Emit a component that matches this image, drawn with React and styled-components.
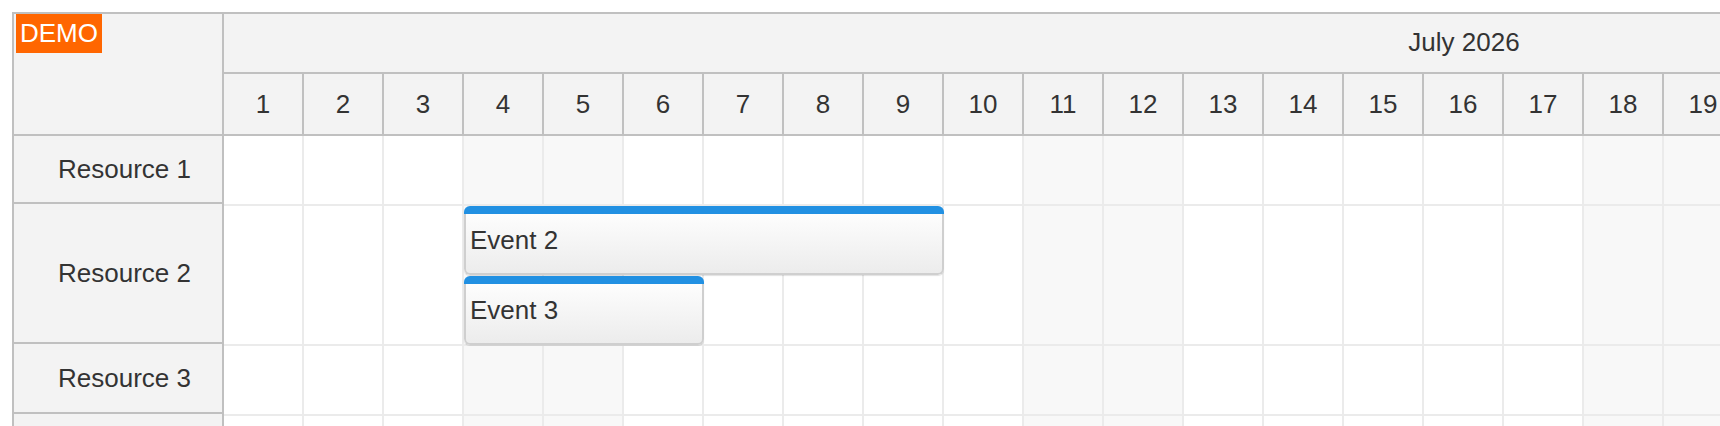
import React from "react";
import styled, { createGlobalStyle } from "styled-components";

const GlobalStyle = createGlobalStyle`
    body {
        margin: 0;
        background: #fff;
        font-family: "Liberation Sans", Arial, sans-serif;
        color: #333;
    }
`;

const CELL = 80;
const DAYS = 31;

const Page = styled.div`
    width: 1720px;
    height: 426px;
    overflow: hidden;
    padding: 12px 0 0 12px;
    box-sizing: border-box;
`;

const Scheduler = styled.div`
    display: flex;
    align-items: flex-start;
    border-left: 2px solid #c0c0c0;
    border-top: 2px solid #c0c0c0;
    font-size: 26px;
`;

const LeftPane = styled.div`
    flex: none;
    width: 210px;
    box-sizing: border-box;
    background: #f3f3f3;
    border-right: 2px solid #c0c0c0;
`;

const Corner = styled.div`
    height: 122px;
    box-sizing: border-box;
    padding-left: 2px;
    border-bottom: 2px solid #c0c0c0;
`;

const DemoBadge = styled.span`
    display: inline-block;
    background: #ff6600;
    color: #fff;
    line-height: 30px;
    padding: 4px 4px 5px;
`;

const ResourceRow = styled.div`
    display: flex;
    align-items: center;
    height: ${(props) => props.h}px;
    box-sizing: border-box;
    padding-left: 44px;
    border-bottom: 2px solid #c0c0c0;
`;

const RightPane = styled.div`
    flex: none;
    width: ${CELL * DAYS}px;
`;

const MonthRow = styled.div`
    height: 60px;
    box-sizing: border-box;
    display: flex;
    align-items: center;
    justify-content: center;
    padding-bottom: 2px;
    background: #f3f3f3;
    border-bottom: 2px solid #c0c0c0;
`;

const DayRow = styled.div`
    display: flex;
    height: 62px;
    box-sizing: border-box;
    background: #f3f3f3;
    border-bottom: 2px solid #c0c0c0;
`;

const DayCell = styled.div`
    flex: none;
    width: ${CELL}px;
    box-sizing: border-box;
    border-right: 2px solid #c0c0c0;
    display: flex;
    align-items: center;
    justify-content: center;
`;

const GridRow = styled.div`
    position: relative;
    display: flex;
    height: ${(props) => props.h}px;
    box-sizing: border-box;
    border-bottom: 2px solid #ebebeb;
`;

const GridCell = styled.div`
    flex: none;
    width: ${CELL}px;
    box-sizing: border-box;
    border-right: 2px solid #ebebeb;
    background: ${(props) => (props.weekend ? "#f8f8f8" : "#fff")};
`;

const EventBox = styled.div`
    position: absolute;
    display: flex;
    flex-direction: column;
    height: 69px;
    border-radius: 6px;
    overflow: hidden;
    box-shadow: 0 1px 1px rgba(0, 0, 0, 0.12);
`;

const EventBar = styled.div`
    flex: none;
    height: 8px;
    background: #2190e2;
`;

const EventBody = styled.div`
    flex: 1;
    border: 2px solid #cfcfcf;
    border-top: none;
    border-radius: 0 0 6px 6px;
    background: linear-gradient(to bottom, #fdfdfd, #ececec);
    padding: 11px 0 0 4px;
    line-height: 30px;
`;

const resources = [
    { name: "Resource 1", left: 68, grid: 70, events: [] },
    {
        name: "Resource 2",
        left: 140,
        grid: 140,
        events: [
            { text: "Event 2", start: 4, days: 6, lane: 0 },
            { text: "Event 3", start: 4, days: 3, lane: 1 },
        ],
    },
    { name: "Resource 3", left: 70, grid: 70, events: [] },
    { name: "Resource 4", left: 70, grid: 70, events: [] },
];

const days = Array.from({ length: DAYS }, (_, i) => i + 1);

// July 1st 2026 is a Wednesday
const isWeekend = (d) => {
    const dow = (2 + d) % 7; // 0 = Sun
    return dow === 0 || dow === 6;
};

const App = () => {
    return (
        <Page>
            <GlobalStyle />
            <Scheduler>
                <LeftPane>
                    <Corner>
                        <DemoBadge>DEMO</DemoBadge>
                    </Corner>
                    {resources.map((r) => (
                        <ResourceRow key={r.name} h={r.left}>
                            {r.name}
                        </ResourceRow>
                    ))}
                </LeftPane>
                <RightPane>
                    <MonthRow>July 2026</MonthRow>
                    <DayRow>
                        {days.map((d) => (
                            <DayCell key={d}>{d}</DayCell>
                        ))}
                    </DayRow>
                    {resources.map((r) => (
                        <GridRow key={r.name} h={r.grid}>
                            {days.map((d) => (
                                <GridCell key={d} weekend={isWeekend(d)} />
                            ))}
                            {r.events.map((e) => (
                                <EventBox
                                    key={e.text}
                                    style={{
                                        left: (e.start - 1) * CELL,
                                        width: e.days * CELL,
                                        top: e.lane * 70,
                                    }}
                                >
                                    <EventBar />
                                    <EventBody>{e.text}</EventBody>
                                </EventBox>
                            ))}
                        </GridRow>
                    ))}
                </RightPane>
            </Scheduler>
        </Page>
    );
};

export default App;
